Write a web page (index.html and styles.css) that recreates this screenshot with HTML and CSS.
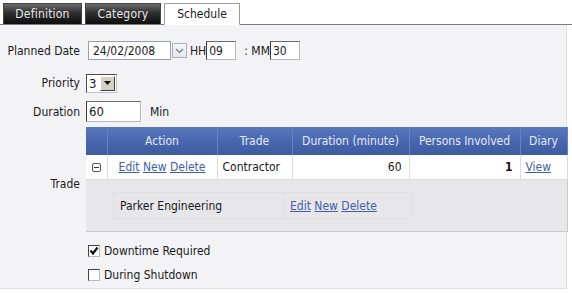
FILE: index.html
```html
<!DOCTYPE html>
<html>
<head>
<meta charset="utf-8">
<link rel="stylesheet" href="styles.css">
</head>
<body>
<div class="tabs">
  <div class="tab dark first">Definition</div>
  <div class="tab dark">Category</div>
  <div class="tab active">Schedule</div>
</div>
<div class="panel">
  <div class="row row1">
    <div class="lbl">Planned Date</div>
    <div class="ctl">
      <div class="inp date">24/02/2008</div>
      <div class="ddbtn"><svg width="9" height="6" viewBox="0 0 9 6"><path d="M1 1 L4.5 4.5 L8 1" fill="none" stroke="#6a7a90" stroke-width="1.2"/></svg></div>
      <span class="hh">HH</span><div class="inp small">09</div>
      <span class="mm">: MM</span><div class="inp small">30</div>
    </div>
  </div>

  <div class="row row2">
    <div class="lbl">Priority</div>
    <div class="ctl">
      <div class="sel"><span class="selv">3</span><span class="selbtn"><svg width="7" height="4" viewBox="0 0 7 4"><path d="M0 0 H7 L3.5 4 Z" fill="#111"/></svg></span></div>
    </div>
  </div>

  <div class="row row3">
    <div class="lbl">Duration</div>
    <div class="ctl">
      <div class="inp dur">60</div><span class="min">Min</span>
    </div>
  </div>

  <div class="row row4">
    <div class="lbl tradelbl">Trade</div>
    <div class="ctl">
      <table class="grid">
        <colgroup><col class="c0"><col class="c1"><col class="c2"><col class="c3"><col class="c4"><col class="c5"></colgroup>
        <thead>
          <tr><th class="h0"></th><th>Action</th><th>Trade</th><th>Duration (minute)</th><th>Persons Involved</th><th>Diary</th></tr>
        </thead>
        <tbody>
          <tr class="datarow">
            <td class="d0"><svg width="9" height="9" viewBox="0 0 9 9"><rect x="0.5" y="0.5" width="8" height="8" rx="1.5" fill="none" stroke="#555" stroke-width="1"/><path d="M2 4.5 H7" stroke="#333" stroke-width="1"/></svg></td>
            <td class="d1"><a>Edit</a> <a>New</a> <a>Delete</a></td>
            <td>Contractor</td>
            <td class="num">60</td>
            <td class="num bold">1</td>
            <td><a>View</a></td>
          </tr>
          <tr class="detail">
            <td colspan="6">
              <table class="inner">
                <tr><td class="i1">Parker Engineering</td><td class="i2"><a>Edit</a> <a>New</a> <a>Delete</a></td></tr>
              </table>
            </td>
          </tr>
        </tbody>
      </table>
    </div>
  </div>

  <div class="row chk chk1">
    <div class="lbl"></div>
    <div class="ctl"><span class="box"><svg width="10" height="10" viewBox="0 0 10 10"><path d="M1.5 4.5 L4 7.5 L8.5 1.5" fill="none" stroke="#111" stroke-width="2.2"/></svg></span>Downtime Required</div>
  </div>

  <div class="row chk chk2">
    <div class="lbl"></div>
    <div class="ctl"><span class="box"></span>During Shutdown</div>
  </div>
</div>
</body>
</html>
```
FILE: styles.css
```css
html, body { margin: 0; padding: 0; background: #ffffff; }
body {
  font-family: "DejaVu Sans Condensed", "DejaVu Sans", sans-serif;
  font-size: 12px;
  color: #1a1a1a;
  width: 572px;
  height: 293px;
  overflow: hidden;
}
.tabs {
  display: flex;
  gap: 3px;
  padding: 3px 0 0 3px;
  height: 21px;
  border-bottom: 1px solid #7d7d7d;
}
.tab {
  width: 76px;
  height: 21px;
  display: flex;
  align-items: center;
  justify-content: center;
  box-sizing: border-box;
}
.tab.first { width: 79px; }
.tab.dark {
  background: linear-gradient(#6a6a6a 0%, #2e2e2e 45%, #0e0e0e 100%);
  color: #e8e8e8;
  border: 1px solid #444;
  border-bottom: none;
  letter-spacing: 0.2px;
}
.tab.active {
  background: #fff;
  color: #222;
  border: 1px solid #9a9a9a;
  border-bottom: 1px solid #fff;
  height: 22px;
  margin-bottom: -1px;
}
.panel {
  background: #f3f3f5;
  width: 567px;
  height: 264px;
  border-right: 1px solid #e0e0e4;
  border-bottom: 1px solid #e0e0e4;
  padding-top: 16px;
  box-sizing: border-box;
}
.row { display: flex; align-items: center; }
.lbl {
  width: 86px;
  flex: none;
  box-sizing: border-box;
  text-align: right;
  padding-right: 6px;
}
.ctl { display: flex; align-items: center; }
.row1 { height: 19px; margin-bottom: 13px; }
.row1 .ctl { padding-left: 2px; }
.row2 { height: 20px; margin-bottom: 8px; }
.row3 { height: 21px; margin-bottom: 5px; }
.inp {
  background: #fff;
  box-sizing: border-box;
  height: 19px;
  border: 1px solid #b4b8bd;
  border-left-color: #3a3a3a;
  border-top-color: #6a6a6a;
  display: flex;
  align-items: center;
  padding-left: 2px;
}
.inp.date { width: 83px; border: 1px solid #9aa0a8; padding-left: 4px; }
.ddbtn {
  width: 15px; height: 15px; box-sizing: border-box;
  margin-left: 1px;
  border: 1px solid #a9b0b9;
  background: linear-gradient(#f6f7f9, #e4e7eb);
  display: flex; align-items: center; justify-content: center;
}
.hh { margin-left: 3px; }
.mm { margin-left: 8px; }
.inp.small { width: 30px; }
.sel {
  width: 31px; height: 19px; box-sizing: border-box;
  border: 1px solid #4a4a4a; border-right-color: #c0c0c0; border-bottom-color: #c0c0c0;
  background: #fff;
  display: flex; align-items: center;
}
.selv { flex: 1; padding-left: 2px; font-size: 13px; }
.selbtn {
  width: 15px; height: 15px; margin-right: 1px;
  background: #d4d0c8;
  border: 1px solid; border-color: #fff #404040 #404040 #fff;
  box-sizing: border-box;
  display: flex; align-items: center; justify-content: center;
}
.inp.dur { width: 55px; height: 21px; font-size: 13px; }
.min { margin-left: 9px; }

.row4 { align-items: center; }
.tradelbl { padding-top: 8px; }
.grid {
  border-collapse: collapse;
  table-layout: fixed;
  width: 481px;
  border-right: 1px solid #c8c8c8;
  border-bottom: 1px solid #c8c8c8;
}
col.c0 { width: 21px; }
col.c1 { width: 110px; }
col.c2 { width: 75px; }
col.c3 { width: 117px; }
col.c4 { width: 111px; }
col.c5 { width: 47px; }
.grid th {
  height: 28px;
  padding: 0;
  font-weight: normal;
  color: #e3e9f6;
  background: linear-gradient(#5a77bb, #4766ad 55%, #3d5ba0);
  border-left: 1px solid #36508f;
  border-right: 1px solid #6682c2;
  text-align: center;
  white-space: nowrap;
}
.grid th.h0 { border-left: none; }
.datarow td {
  height: 24px;
  background: #fff;
  border-right: 1px solid #dcdcdc;
  border-bottom: 1px solid #dcdcdc;
  padding: 0 5px;
  white-space: nowrap;
}
.datarow td.d0 { padding: 0 0 0 6px; }
.datarow td.d0 svg { display: block; }
.datarow td.d1 { text-align: center; padding: 0; }
.num { text-align: right; padding-right: 7px !important; }
.bold { font-weight: bold; color: #2a0a10; }
a { color: #4160a8; text-decoration: underline; }
.detail td {
  background: #e7e7e9;
  height: 51px;
  padding: 0 0 0 27px;
}
.inner {
  border-collapse: collapse;
  background: #fff;
}
.inner td {
  height: 25px;
  padding: 0 6px;
  border: 1px solid #e0e0e0;
  white-space: nowrap;
}
.inner .i1 { width: 157px; }
.inner .i2 { width: 116px; padding-left: 6px; }
.chk1 { margin-top: 9px; height: 20px; }
.chk2 { margin-top: 4px; height: 20px; }
.box {
  width: 12px; height: 12px; box-sizing: border-box;
  border: 1px solid #444; border-right-color: #bbb; border-bottom-color: #bbb;
  background: #fff;
  margin-left: 2px; margin-right: 4px;
  display: inline-flex; align-items: center; justify-content: center;
}
.box svg { display: block; }
```
